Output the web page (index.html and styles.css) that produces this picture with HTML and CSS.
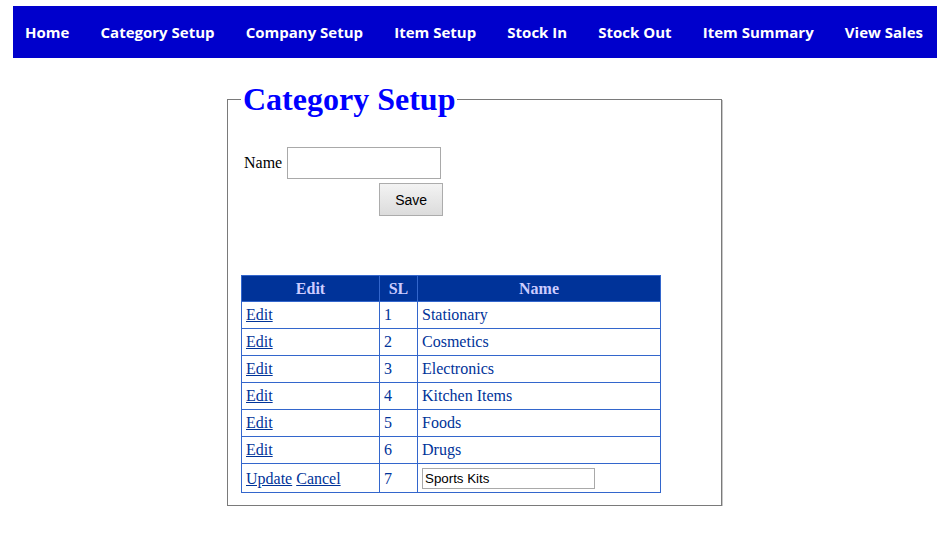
FILE: index.html
```html
<!DOCTYPE html>
<html>
<head>
<meta charset="utf-8">
<title>Category Setup</title>
<link rel="stylesheet" href="styles.css">
</head>
<body>
<nav class="menu">
  <a class="menu-link" href="#">Home</a>
  <a class="menu-link" href="#">Category Setup</a>
  <a class="menu-link" href="#">Company Setup</a>
  <a class="menu-link" href="#">Item Setup</a>
  <a class="menu-link" href="#">Stock In</a>
  <a class="menu-link" href="#">Stock Out</a>
  <a class="menu-link" href="#">Item Summary</a>
  <a class="menu-link" href="#">View Sales</a>
</nav>
<fieldset class="panel">
  <legend class="panel-title">Category Setup</legend>
  <div class="form-grid">
    <label class="form-label" for="name">Name</label>
    <input class="text-input" id="name" type="text">
    <button class="save-btn" type="button">Save</button>
  </div>
  <table class="grid">
    <thead>
      <tr><th class="col-edit">Edit</th><th class="col-sl">SL</th><th class="col-name">Name</th></tr>
    </thead>
    <tbody>
      <tr><td><a href="#">Edit</a></td><td>1</td><td>Stationary</td></tr>
      <tr><td><a href="#">Edit</a></td><td>2</td><td>Cosmetics</td></tr>
      <tr><td><a href="#">Edit</a></td><td>3</td><td>Electronics</td></tr>
      <tr><td><a href="#">Edit</a></td><td>4</td><td>Kitchen Items</td></tr>
      <tr><td><a href="#">Edit</a></td><td>5</td><td>Foods</td></tr>
      <tr><td><a href="#">Edit</a></td><td>6</td><td>Drugs</td></tr>
      <tr class="edit-row"><td><a href="#">Update</a> <a href="#">Cancel</a></td><td>7</td><td><input class="cell-input" type="text" value="Sports Kits"></td></tr>
    </tbody>
  </table>
</fieldset>
</body>
</html>
```
FILE: styles.css
```css
html, body {
  margin: 0;
  padding: 0;
  background: #ffffff;
}

body {
  font-family: "Liberation Serif", "Times New Roman", serif;
  font-size: 16px;
  color: #000;
}

.menu {
  margin: 6px 14px 0 13px;
  height: 52px;
  background: #0000cc;
  display: flex;
  align-items: center;
  justify-content: space-between;
  padding: 0 14px 0 12px;
  box-sizing: border-box;
}

.menu-link {
  color: #ffffff;
  text-decoration: none;
  font-family: "Open Sans", "DejaVu Sans", sans-serif;
  font-weight: 700;
  font-size: 15px;
  line-height: 20px;
  padding-bottom: 1px;
}

.panel {
  box-sizing: border-box;
  width: 495px;
  margin: 23px 0 0 227px;
  padding: 0 12px 12px 13px;
  border: 1px solid #7a7a7a;
  box-shadow: 1px 1px 0 #c8c8c8;
}

.panel-title {
  padding: 0 2px;
  color: #0000ff;
  font-family: "Liberation Serif", "Times New Roman", serif;
  font-weight: 700;
  font-size: 32px;
  line-height: 37px;
}

.form-grid {
  display: grid;
  grid-template-columns: auto 154px;
  column-gap: 5px;
  row-gap: 4px;
  align-items: center;
  justify-content: start;
  margin: 29px 0 0 3px;
}

.form-label {
  font-size: 16px;
}

.text-input {
  box-sizing: border-box;
  width: 154px;
  height: 32px;
  border: 1px solid #a9a9a9;
  margin: 0;
  padding: 2px 4px;
  font-size: 14px;
}

.save-btn {
  grid-column: 2;
  justify-self: end;
  margin-right: -2px;
  box-sizing: border-box;
  width: 64px;
  height: 33px;
  border: 1px solid #acacac;
  border-radius: 0;
  background: linear-gradient(#f3f3f3, #dcdcdc);
  font-family: "Liberation Sans", Arial, sans-serif;
  font-size: 14px;
  color: #000;
  padding: 0;
}

.grid {
  border-collapse: collapse;
  width: 420px;
  margin-top: 59px;
  color: #003399;
  font-size: 16px;
}

.grid th,
.grid td {
  border: 1px solid #3366cc;
  padding: 4px;
  line-height: 18px;
}

.grid th {
  background: #003399;
  color: #ccccff;
  font-weight: 700;
  text-align: center;
  padding-bottom: 3px;
}

.grid td {
  text-align: left;
}

.grid a {
  color: #003399;
  text-decoration: underline;
}

.col-edit { width: 129px; }
.col-sl { width: 29px; }

.edit-row td {
  padding-top: 4px;
  padding-bottom: 3px;
  height: 21px;
}

.cell-input {
  box-sizing: border-box;
  width: 173px;
  height: 21px;
  margin: 0;
  border: 1px solid #a9a9a9;
  padding: 1px 2px;
  font-family: "Liberation Sans", Arial, sans-serif;
  font-size: 13.33px;
  color: #000;
  vertical-align: middle;
}
```
